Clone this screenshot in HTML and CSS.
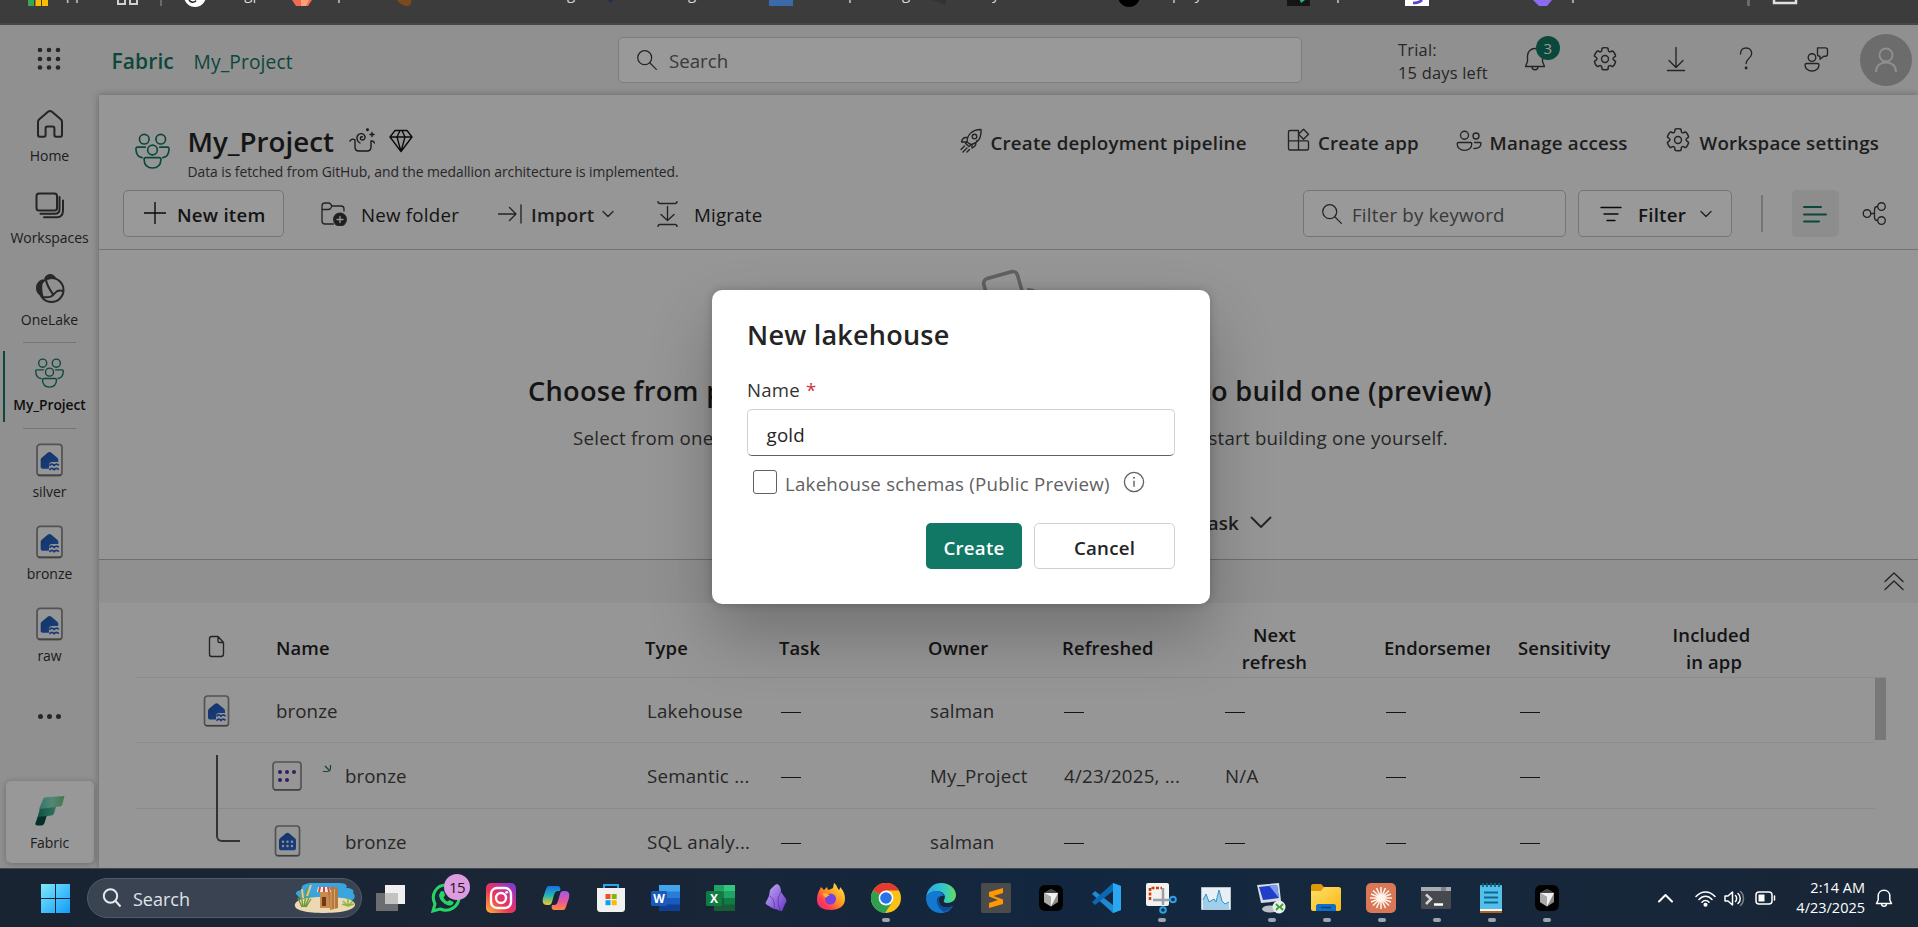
FILE: index.html
```html
<!DOCTYPE html>
<html lang="en">
<head>
<meta charset="utf-8">
<title>My_Project - Fabric</title>
<link rel="stylesheet" href="styles.css">
</head>
<body>
<svg class="defs" aria-hidden="true">
  <defs>
    <linearGradient id="gBlue" x1="0" y1="0" x2="1" y2="1"><stop offset="0" stop-color="#2455a8"/><stop offset="1" stop-color="#2a6bd8"/></linearGradient>
    <linearGradient id="gF1" x1="0" y1="0" x2="1" y2="0"><stop offset="0" stop-color="#4fc7b4"/><stop offset=".5" stop-color="#8fe0c4"/><stop offset="1" stop-color="#6fc77a"/></linearGradient>
    <linearGradient id="gF2" x1="0" y1="0" x2="1" y2="0"><stop offset="0" stop-color="#1f8a70"/><stop offset="1" stop-color="#4fc0a0"/></linearGradient>
    <linearGradient id="gWin" x1="0" y1="0" x2="1" y2="1"><stop offset="0" stop-color="#7fe8fb"/><stop offset="1" stop-color="#109cfa"/></linearGradient>
    <linearGradient id="gInsta" x1="0" y1="1" x2="1" y2="0"><stop offset="0" stop-color="#fdc03c"/><stop offset=".4" stop-color="#f0364f"/><stop offset=".7" stop-color="#c4309c"/><stop offset="1" stop-color="#6a3fe0"/></linearGradient>
    <linearGradient id="gFire" x1="1" y1="0" x2="0" y2="1"><stop offset="0" stop-color="#fff44f"/><stop offset=".45" stop-color="#ff9a1f"/><stop offset=".75" stop-color="#ff3a50"/><stop offset="1" stop-color="#e6249a"/></linearGradient>
    <linearGradient id="gEdge" x1="0" y1="0" x2="1" y2="0"><stop offset="0" stop-color="#2aa8ea"/><stop offset=".6" stop-color="#33c8c8"/><stop offset="1" stop-color="#64dd5a"/></linearGradient>
    <linearGradient id="gCop1" x1="0" y1="0" x2="0" y2="1"><stop offset="0" stop-color="#1a6fe8"/><stop offset=".5" stop-color="#24b6b0"/><stop offset="1" stop-color="#f4c92c"/></linearGradient>
    <linearGradient id="gCop2" x1="0" y1="0" x2="0" y2="1"><stop offset="0" stop-color="#9b5de8"/><stop offset=".55" stop-color="#e8579c"/><stop offset="1" stop-color="#ff8a3c"/></linearGradient>
    <linearGradient id="gObs" x1="0" y1="0" x2="1" y2="1"><stop offset="0" stop-color="#c3adf7"/><stop offset="1" stop-color="#6a35c9"/></linearGradient>
    <linearGradient id="gFold" x1="0" y1="0" x2="1" y2="1"><stop offset="0" stop-color="#ffdf6a"/><stop offset="1" stop-color="#f9b915"/></linearGradient>

    <symbol id="search" viewBox="0 0 24 24"><circle cx="9.5" cy="9.5" r="7.6"/><path d="M15 15l7.2 7.2"/></symbol>
    <symbol id="gear" viewBox="0 0 24 24"><path d="M12.01 1.5c.74 0 1.5.1 2.25.28.32.07.55.33.59.65l.2 1.75a1.38 1.38 0 0 0 1.92 1.11l1.6-.7c.3-.13.64-.06.85.17a10.3 10.3 0 0 1 2.3 4c.1.3 0 .63-.26.82l-1.42 1.05a1.38 1.38 0 0 0 0 2.22l1.42 1.05c.26.19.36.52.27.82a10.3 10.3 0 0 1-2.3 4 .75.75 0 0 1-.85.17l-1.62-.71a1.38 1.38 0 0 0-1.93 1.12l-.2 1.74a.75.75 0 0 1-.58.65 9.9 9.9 0 0 1-4.5 0 .75.75 0 0 1-.57-.65l-.2-1.74a1.38 1.38 0 0 0-1.93-1.11l-1.6.7a.75.75 0 0 1-.85-.18 10.3 10.3 0 0 1-2.3-4c-.1-.3 0-.63.26-.82l1.42-1.05a1.38 1.38 0 0 0 0-2.22L2.56 9.57a.75.75 0 0 1-.28-.82 10.3 10.3 0 0 1 2.3-4c.23-.23.57-.3.86-.17l1.6.7c.4.17.86.15 1.25-.08.38-.22.63-.6.68-1.04l.2-1.73a.75.75 0 0 1 .58-.65c.7-.16 1.5-.28 2.26-.28z"/><circle cx="12" cy="12" r="3.2"/></symbol>
    <symbol id="people" viewBox="0 0 34 35"><circle cx="9" cy="6" r="4.700"/><circle cx="25" cy="6" r="4.700"/><circle cx="17" cy="16.500" r="4.700"/><path d="M10 13.800H2.400c-1.200 0-1.600.6-1.500 2 .2 4.500 2.300 7.600 6 8.200M24 13.800h7.600c1.200 0 1.600.6 1.500 2-.2 4.500-2.300 7.600-6 8.200M10.500 24h13c1.200 0 1.800.6 1.700 1.800-.2 5-3.200 8.200-8.200 8.200s-8-3.200-8.200-8.200c0-1.200.5-1.800 1.700-1.800z"/></symbol>
    <symbol id="lake" viewBox="0 0 26 32"><rect x="1" y="1" width="24" height="30" rx="3" fill="#fafafa" stroke="#8a8a8a" stroke-width="1.700"/><path d="M2 30.500h22" stroke="#666" stroke-width="1.200"/><path d="M4.500 24.500V16c0-1 .4-1.600 1-2.200l6-5c1-.8 2-.8 3 0l6 5c.6.600 1 1.200 1 2.200v2h-6c-2 0-3 1.500-3 3.500v3H7c-1.500 0-2.500-.5-2.500-2z" fill="url(#gBlue)"/><path d="M13 21.500c1.500-2 3-2 4.500-.3 1.500-1.700 3-1.700 4.500 0M13 25.700c1.500-2 3-2 4.500-.3 1.500-1.700 3-1.700 4.500 0" fill="none" stroke="#2a5fc4" stroke-width="1.700"/></symbol>
    <symbol id="sql" viewBox="0 0 26 32"><rect x="1" y="1" width="24" height="30" rx="3" fill="#fafafa" stroke="#8a8a8a" stroke-width="1.700"/><path d="M2 30.500h22" stroke="#666" stroke-width="1.200"/><path d="M4.500 23V15.500c0-1 .4-1.600 1-2.200l6-5c1-.8 2-.8 3 0l6 5c.6.600 1 1.200 1 2.200V23c0 1.500-1 2.300-2.300 2.300H7c-1.500 0-2.500-.8-2.500-2.300z" fill="url(#gBlue)"/><g fill="#eef"><circle cx="8.500" cy="16.700" r="1.200"/><circle cx="13" cy="16.700" r="1.200"/><circle cx="17.500" cy="16.700" r="1.200"/><circle cx="8.500" cy="21" r="1.200"/><circle cx="13" cy="21" r="1.200"/><circle cx="17.500" cy="21" r="1.200"/></g></symbol>
    <symbol id="cursorapp" viewBox="0 0 24 26"><rect width="24" height="26" rx="6" fill="#020202"/><path d="M12 4l7 4v9l-7 4.500L5 17V8z" fill="#8d8d8d"/><path d="M12 4l7 4-7 3-7-3z" fill="#444"/><path d="M5 8h14l-7 13.500V12z" fill="#f0f0f0"/><path d="M12 12v9.500L5 17V8z" fill="#aaa"/></symbol>
  </defs>
</svg>

<div class="bookmarks">
  <svg width="1918" height="25" viewBox="0 0 1918 25">
    <g><path d="M28 0h6v6h-6z" fill="#34a853"/><path d="M35.500 0h12.500v6H35.500z" fill="#fbbc04"/><path d="M41 0h1v6h-1z" fill="#3c3c3c"/>
    <path d="M118 0v4h7V0M130 0v4h7V0" fill="none" stroke="#d0d0d0" stroke-width="2"/><path d="M160 0h2v6h-2z" fill="#6a6a6a"/>
    <circle cx="195" cy="-4" r="11" fill="#fff"/><path d="M189 0q3 4 7 1M195 0l4-2" stroke="#222" stroke-width="1.500" fill="none"/>
    <path d="M292 0h20l-4 6h-12z" fill="#f26a4f"/><path d="M301 0h8l-3 6h-5z" fill="#ffa07c"/>
    <path d="M397 0h14c1 3 0 5-3 6-5 0-8-2-11-6z" fill="#7a4a1e"/><path d="M608 0h5l-3 3z" fill="#1c3350"/>
    <path d="M769 0h24v6h-24z" fill="#3a6ba8"/><path d="M932 0h14v5z" fill="#333"/><circle cx="1129" cy="-4" r="11" fill="#000"/>
    <path d="M1287 0h23v6h-23z" fill="#151515"/><path d="M1300 0h5l-4 3z" fill="#2fb683"/><path d="M1405 0h24v6h-24z" fill="#fff"/><path d="M1413 3q6 0 9-3" stroke="#5b3fd0" stroke-width="2.500" fill="none"/>
    <path d="M1533 0h19l-5 6h-8z" fill="#8b6cf0"/><path d="M1747 0h3v6h-3z" fill="#6a6a6a"/><path d="M1774 0v3h22V0" fill="none" stroke="#e0e0e0" stroke-width="2.500"/></g>
    <g class="bm-text"><text x="56" y="-1">Apps</text><text x="211" y="-1">Chatgpt</text><text x="337" y="-1">p</text><text x="567" y="-1">g</text><text x="688" y="-1">g</text><text x="848" y="-1">p</text><text x="902" y="-1">g</text><text x="992" y="-1">y</text><text x="1172" y="-1">ploy</text><text x="1336" y="-1">p</text><text x="1571" y="-1">p</text></g>
  </svg>
</div>

<div class="app">
  <header class="topbar">
    <svg class="waffle" width="24" height="24" viewBox="0 0 24 24"><g><circle cx="3" cy="3" r="2.300"/><circle cx="12" cy="3" r="2.300"/><circle cx="21" cy="3" r="2.300"/><circle cx="3" cy="12" r="2.300"/><circle cx="12" cy="12" r="2.300"/><circle cx="21" cy="12" r="2.300"/><circle cx="3" cy="20.500" r="2.300"/><circle cx="12" cy="20.500" r="2.300"/><circle cx="21" cy="20.500" r="2.300"/></g></svg>
    <span class="brand">Fabric</span>
    <span class="crumb">My_Project</span>
    <div class="searchbox"><svg class="ic" width="22" height="22"><use href="#search"/></svg><span>Search</span></div>
    <div class="trial">Trial:<br>15 days left</div>
    <nav class="top-icons">
      <div class="ti"><svg class="ic" width="24" height="26" viewBox="0 0 24 26"><path d="M12 2.500c-4.500 0-7.500 3.300-7.500 7.500v5.500L2.500 20.500h19L19.500 15.500V10c0-4.200-3-7.500-7.500-7.500zM9 20.700c0 4 6 4 6 0"/></svg><b class="badge">3</b></div>
      <div class="ti"><svg class="ic" width="26" height="26"><use href="#gear"/></svg></div>
      <div class="ti"><svg class="ic" width="22" height="26" viewBox="0 0 22 26"><path d="M11 1.500v20M4 14.500l7 7 7-7M2.500 24.500h17"/></svg></div>
      <div class="ti"><svg class="ic" width="16" height="26" viewBox="0 0 16 26"><path d="M2.500 8c0-4 2.300-6 5.600-6s5.600 2.200 5.600 5.500c0 4.500-5.600 5.300-5.600 10"/><circle cx="8.100" cy="22" r=".8" fill="#333"/></svg></div>
      <div class="ti"><svg class="ic" width="26" height="26" viewBox="0 0 26 26"><circle cx="9" cy="11.500" r="3.800"/><path d="M3.500 17.500h11c1 0 1.500.5 1.500 1.500 0 3.500-3 6-7 6s-7-2.500-7-6c0-1 .5-1.500 1.500-1.500zM14.500 1.800h8c1.200 0 2 .8 2 2v4.400c0 1.200-.8 2-2 2h-1.700l-3.800 3v-3c-1.600 0-2.500-.8-2.500-2z"/></svg></div>
    </nav>
    <div class="avatar"><svg width="24" height="26" viewBox="0 0 24 26"><circle cx="12" cy="8" r="6.500"/><path d="M2 25c0-6 4-9.500 10-9.500S22 19 22 25"/></svg></div>
  </header>

  <div class="body">
    <aside class="side">
      <div class="item"><svg class="ic thick" width="28" height="29" viewBox="0 0 28 29"><path d="M2 12.500c0-1.200.4-2 1.300-2.800L12 2.200c1.300-1 2.700-1 4 0l8.700 7.500c.9.800 1.300 1.600 1.300 2.800v13c0 1-.8 1.800-1.800 1.800h-4c-1 0-1.800-.8-1.800-1.800v-6.700c0-1-.8-1.800-1.800-1.800h-5.200c-1 0-1.800.8-1.800 1.800v6.700c0 1-.8 1.800-1.800 1.800h-4c-1 0-1.800-.8-1.800-1.800z"/></svg><span>Home</span></div>
      <div class="item"><svg class="ic thick" width="30" height="28" viewBox="0 0 30 28"><rect x="1.500" y="1.500" width="20.500" height="17" rx="2.500"/><path d="M24.500 5v12c0 3-1.500 4.800-4.500 4.800H5.500M28 8.500V18c0 5-2 7.300-6 7.300H9"/></svg><span>Workspaces</span></div>
      <div class="item short"><svg width="30" height="30" viewBox="0 0 30 30"><path d="M9 5.500C11 2 13 1 15 1c3 0 5.500 2 6.500 5-4-.5-8 .5-10 .8zM1 15C1 10.500 4 7 8.500 6 6.500 12 7 18 8.500 23.500 4 23 1 19.500 1 15z" fill="#424242"/><g fill="none" stroke="#424242" stroke-width="2"><circle cx="16.500" cy="17" r="12"/><path d="M11 7c1 6 4 10 7.500 15M6.500 24c9 1 11-.5 14-4.500 2-2.500 4-2.500 8-1.500"/></g></svg><span>OneLake</span></div>
      <hr class="d1">
      <div class="item active"><svg class="ic green" width="29" height="30"><use href="#people"/></svg><span>My_Project</span></div>
      <hr class="d2">
      <div class="item"><svg width="27" height="33"><use href="#lake"/></svg><span>silver</span></div>
      <div class="item"><svg width="27" height="33"><use href="#lake"/></svg><span>bronze</span></div>
      <div class="item"><svg width="27" height="33"><use href="#lake"/></svg><span>raw</span></div>
      <div class="more"><i></i><i></i><i></i></div>
      <div class="fabric"><svg width="30" height="30" viewBox="0 0 30 30"><path d="M3.500 18.500L12 19l-2.500 8c-.8 2-2 2.500-4 2.500h-3C.5 29.500 0 28.500.5 27z" fill="#0d4f45"/><path d="M5 12l16-1.500-1.800 6.500c-.4 1.500-1.400 2.200-3 2.400L2.700 21z" fill="url(#gF2)"/><path d="M8 3.500C8.500 2 9.500 1.300 11 1.200L29.500 0l-2.300 8.500c-.4 1.300-1.200 1.900-2.600 2L4 13z" fill="url(#gF1)"/></svg><span>Fabric</span></div>
    </aside>

    <main class="panel">
      <section class="head">
        <svg class="ic green wsicon" width="35" height="36"><use href="#people"/></svg>
        <div class="titles">
          <div class="trow"><h1>My_Project</h1>
            <svg class="ic dk" width="26" height="25" viewBox="0 0 26 25"><path d="M1 13c1.500-2 3-2.500 5-1v7c0 3 1 4 4 4h8c3 0 4-1 4-4v-6c1.500-.5 2.500 0 3.500 2M13.500 9c-1.500-1-3 1-1.500 2.500 2 1.500 4.500-.5 4-3-.7-3-5-4-7-1.500s-1 6.500 2 8M21 6.500h4M23 4.500v4"/><circle cx="18.500" cy="1.800" r=".8"/></svg>
            <svg class="ic blk" width="24" height="24" viewBox="0 0 24 24"><path d="M6 1.500h12L23 8 12 22.500 1 8zM1 8h22M8 8l4 14.500L16 8l-3-6.500h-2z"/></svg>
          </div>
          <p>Data is fetched from GitHub, and the medallion architecture is implemented.</p>
        </div>
        <div class="links">
          <a class="l1"><svg class="ic" width="24" height="25" viewBox="0 0 24 25"><path d="M8 14C8 7 13 1.500 22 1.500c.5 8-3 13.500-10 15zM8.500 9.500H6.200C4 10 3 11.500 2.500 14l5 0M13 16.500v3.500c2.500-1 4-2.500 4-5.500l1-2M8 14l4 3-2 1.500-3.500-3zM5.500 18L2 21.500M8 20l-4 4M10.500 21.500L8 24"/><circle cx="15.500" cy="8.500" r="2.300"/></svg>Create deployment pipeline</a>
          <a class="l2"><svg class="ic" width="23" height="24" viewBox="0 0 23 24"><path d="M11.500 2.500H3c-1 0-1.500.5-1.500 1.500v16.500c0 1 .5 1.500 1.500 1.500h17c1 0 1.500-.5 1.500-1.500V14c0-.8-.4-1.200-1.200-1.200H1.500M11.500 2.500V22M16.500 1.200l5 5-5 5-5-5z"/></svg>Create app</a>
          <a class="l3"><svg class="ic" width="26" height="22" viewBox="0 0 26 22"><circle cx="8.500" cy="5.200" r="4"/><circle cx="20" cy="6" r="3"/><path d="M2.500 12.500h12c.8 0 1.300.5 1.300 1.300 0 4-3 6.500-7.300 6.500s-7.300-2.500-7.300-6.500c0-.8.500-1.300 1.300-1.300zM18.500 12.500H24c.7 0 1 .3 1 1 0 3-2.500 5.300-7 5"/></svg>Manage access</a>
          <a class="l4"><svg class="ic" width="26" height="26"><use href="#gear"/></svg>Workspace settings</a>
        </div>
      </section>

      <section class="tools">
        <button class="newitem"><svg class="ic blk" width="22" height="22" viewBox="0 0 22 22"><path d="M11 0v22M0 11h22"/></svg><span>New item</span></button>
        <a class="t1"><svg class="ic" width="26" height="24" viewBox="0 0 26 24"><path d="M12.500 22H4c-1.700 0-3-1.200-3-3V4c0-1.700 1.200-3 3-3h3.500c1 0 1.500.3 2 1l1.500 2h9c1.700 0 3 1.200 3 3v2M1 7.500h6.500c1 0 1.500-.3 2-1L11 4"/><circle cx="19" cy="17.500" r="6.300" fill="#333"/><path d="M19 14.500v6M16 17.500h6" stroke="#fafafa"/></svg><span>New folder</span></a>
        <a class="t2"><svg class="ic" width="24" height="20" viewBox="0 0 24 20"><path d="M0 10h18M11.500 3.500l6.500 6.500-6.500 6.500M23 1v18"/></svg><b>Import</b><svg class="ic" width="12" height="8" viewBox="0 0 12 8"><path d="M1 1.500l5 5 5-5"/></svg></a>
        <a class="t3"><svg class="ic" width="21" height="26" viewBox="0 0 21 26"><path d="M1 .5C1 2 1.500 2.500 3 2.500h15c1.500 0 2-.5 2-2M1 25.500c0-1.500.5-2 2-2h15c1.500 0 2 .5 2 2M10.500 5.500v14M4 13.500l6.500 6 6.500-6"/></svg><span>Migrate</span></a>
        <div class="filterbox"><svg class="ic" width="22" height="22"><use href="#search"/></svg><span>Filter by keyword</span></div>
        <button class="filterbtn"><svg class="ic blk" width="22" height="16" viewBox="0 0 22 16"><path d="M1 1.500h20M4 8h14M7 14.500h8"/></svg><span>Filter</span><svg class="ic" width="12" height="8" viewBox="0 0 12 8"><path d="M1 1.500l5 5 5-5"/></svg></button>
        <i class="vsep"></i>
        <div class="listbtn"><svg width="24" height="18" viewBox="0 0 24 18"><path d="M1 2h17M1 9.500h22M1 16.500h15" stroke="#117865" stroke-width="2" stroke-linecap="round"/></svg></div>
        <svg class="ic lineage" width="25" height="24" viewBox="0 0 25 24"><circle cx="5" cy="12" r="3.800"/><circle cx="19.500" cy="5" r="3.800"/><circle cx="19.500" cy="19" r="3.800"/><path d="M9 12h3.500M15.500 5c-2 0-3 1-3 3v8c0 2 1 3 3 3"/></svg>
      </section>

      <section class="flow">
        <svg class="art" width="64" height="50" viewBox="0 0 64 50"><g fill="none" stroke="#a2a2a2" stroke-width="3.600"><rect x="6" y="5" width="35" height="38" rx="5" transform="rotate(-16 25 24)"/><path d="M46 21h3c3 0 6 2 6 5v20"/></g></svg>
        <div class="fh"><span>Choose from predesigned</span><span>a task to build one (preview)</span></div>
        <div class="fs"><span>Select from one of Microsoft's</span><span>a task to start building one yourself.</span></div>
        <div class="fa"><b>Add a task</b><svg class="ic chev" width="22" height="13" viewBox="0 0 22 13"><path d="M1.500 1.500l9.500 9.500 9.500-9.500"/></svg></div>
      </section>
      <div class="bar"><svg class="ic" width="20" height="20" viewBox="0 0 20 20"><path d="M1 10.500l9-8.500 9 8.500M1 18.500L10 10l9 8.500"/></svg></div>

      <section class="table">
        <div class="row hd"><span><svg class="ic docic" width="17" height="23" viewBox="0 0 17 23"><path d="M3.500 1.500h6.500l5.500 6v11.500c0 1.500-.8 2.500-2.500 2.500H3.500C2 21.500 1.500 20.500 1.500 19V4c0-1.500.5-2.500 2-2.500zM10 1.500V6c0 1 .5 1.500 1.500 1.500h4"/></svg></span><span>Name</span><span>Type</span><span>Task</span><span>Owner</span><span>Refreshed</span><span class="two">Next<br>refresh</span><span class="clip">Endorsement</span><span>Sensitivity</span><span class="two inc">Included<br>&nbsp;in app</span></div>
        <div class="row"><span><svg class="lk" width="27" height="32"><use href="#lake"/></svg></span><span class="nm">bronze</span><span>Lakehouse</span><span><i class="dash"></i></span><span>salman</span><span><i class="dash"></i></span><span class="nx"><i class="dash"></i></span><span><i class="dash"></i></span><span><i class="dash"></i></span><span></span></div>
        <div class="row r2"><span></span><span class="nm kid"><svg class="sm" width="30" height="30" viewBox="0 0 30 30"><rect x="1" y="1" width="28" height="28" rx="3" fill="#fafafa" stroke="#8a8a8a" stroke-width="1.700"/><path d="M2 28.800h26" stroke="#666" stroke-width="1.200"/><g fill="#5a2fa0"><circle cx="8" cy="11" r="2"/><circle cx="15" cy="11" r="2"/><circle cx="22" cy="11" r="2"/><circle cx="8" cy="19" r="2"/><circle cx="15" cy="19" r="2"/></g></svg><svg class="arr" width="9" height="8" viewBox="0 0 9 8"><path d="M2 1l4 4M7.500 0v2.500c0 3-1 4-3.500 4H0" fill="none" stroke="#2f6a60" stroke-width="1.200"/></svg>bronze</span><span>Semantic ...</span><span><i class="dash"></i></span><span>My_Project</span><span>4/23/2025, ...</span><span class="nx">N/A</span><span><i class="dash"></i></span><span><i class="dash"></i></span><span></span></div>
        <div class="row"><span></span><span class="nm kid k2"><svg width="27" height="32"><use href="#sql"/></svg>bronze</span><span>SQL analy...</span><span><i class="dash"></i></span><span>salman</span><span><i class="dash"></i></span><span class="nx"><i class="dash"></i></span><span><i class="dash"></i></span><span><i class="dash"></i></span><span></span></div>
        <i class="tree"></i><i class="scroll"></i>
      </section>
    </main>
  </div>
  <div class="shade"></div>

  <div class="dialog">
    <h2>New lakehouse</h2>
    <label>Name <em>*</em></label>
    <div class="field">gold</div>
    <div class="check"><i></i><span>Lakehouse schemas (Public Preview)</span><svg width="22" height="22" viewBox="0 0 22 22"><circle cx="11" cy="11" r="9.600" fill="none" stroke="#616161" stroke-width="1.300"/><path d="M11 9.700v6" stroke="#616161" stroke-width="1.400"/><circle cx="11" cy="6.700" r="1" fill="#616161"/></svg></div>
    <div class="btns"><button class="create">Create</button><button class="cancel">Cancel</button></div>
  </div>
</div>

<footer class="taskbar">
  <svg class="start" width="29" height="29" viewBox="0 0 29 29"><path d="M0 0h14v14H0zM15 0h14v14H15zM0 15h14v14H0zM15 15h14v14H15z" fill="url(#gWin)"/></svg>
  <div class="tsearch"><svg width="20" height="20" viewBox="0 0 20 20" fill="none" stroke="#e6e9ee" stroke-width="2"><circle cx="8.500" cy="8" r="6.700"/><path d="M13.500 13l5 5.500"/></svg><span>Search</span>
    <svg width="62" height="32" viewBox="0 0 62 32"><path d="M3 13C0 11 4 8 8 8 6 3 12 1 18 1h28c6 0 8 3 6 5 5 0 9 2 7 5 3 3 2 6-2 8H8z" fill="#3aa5dc"/><path d="M1 22c2-5 12-7 28-7s30 1 32 7c1 5-10 9-30 9S-1 28 1 22z" fill="#ecd9b4"/><path d="M26 10h10v16H26z" fill="#c98b4c"/><path d="M34 8c3-4 8-4 10-1v19l-8 2z" fill="#b5793f"/><path d="M37 8v19M40.500 7v20" stroke="#dca86a"/><path d="M28 15h4v9h-4z" fill="#6b3c19"/><path d="M24 5h11l2 5H23z" fill="#f3f0ea"/><path d="M25 5h2l-1 5h-2zM29 5h2v5h-2zM33 5h2l1 5h-2z" fill="#dc4438"/><path d="M9 25L7 12M10 25l3-19M11 25l5-12M12 25l5-8M8 25l-4-9" stroke="#6f9a34" stroke-width="1.400"/><path d="M17 3l-4 11M8 7l1 9" stroke="#e8c878" stroke-width="2"/><path d="M54 24l-5-5M54 24v-8M54 24l5-5M54 24l-6-2M54 24l6-2" stroke="#88b83c" stroke-width="1.500"/></svg></div>
  <div class="apps">
    <i><svg width="30" height="28" viewBox="0 0 30 28"><path d="M0 9h22v18H0z" fill="#6b6d70"/><path d="M9 1h20v19H9z" fill="#f0f0f0"/><path d="M9 9h13v11H9z" fill="#c2c2c2"/></svg></i>
    <i><svg width="30" height="30" viewBox="0 0 30 30"><path d="M2 28l2-7C-1 11 6 2 15 2s14 7 13 14-9 14-19 10z" fill="none" stroke="#25d366" stroke-width="3"/><path d="M10 8l3 .5 1 4-1.500 2c1 2 2 3 4 4l2-1.500 4 2c0 3-3 4-5 3.500C12 21 8 16 8 12z" fill="#25d366"/></svg><b class="wb">15</b></i>
    <i><svg width="30" height="30" viewBox="0 0 30 30"><rect width="30" height="30" rx="5" fill="url(#gInsta)"/><rect x="5" y="5" width="20" height="20" rx="6" fill="none" stroke="#fff" stroke-width="2.400"/><circle cx="15" cy="15" r="5" fill="none" stroke="#fff" stroke-width="2.400"/><circle cx="20.700" cy="9.300" r="1.400" fill="#fff"/></svg></i>
    <i><svg width="28" height="26" viewBox="0 0 28 26"><path d="M7 1h8c3 0 4 2 3 5h-2c-2 0-3 1-4 4l-2 7c-1 3-2 3-5 3-4 0-5-3-4-7l3-9c1-2 1-3 3-3z" fill="url(#gCop1)"/><path d="M21 25h-8c-3 0-4-2-3-5h2c2 0 3-1 4-4l2-7c1-3 2-3 5-3 4 0 5 3 4 7l-3 9c-1 2-1 3-3 3z" fill="url(#gCop2)"/></svg></i>
    <i><svg width="30" height="30" viewBox="0 0 30 30"><path d="M8 6V2h14v4" fill="none" stroke="#2ba4ec" stroke-width="2"/><path d="M1 5h28v20c0 3-1 4-4 4H5c-3 0-4-1-4-4z" fill="#f1f1f1"/><path d="M9.500 11h5v5h-5z" fill="#f25022"/><path d="M15.700 11h5v5h-5z" fill="#7fba00"/><path d="M9.500 17.200h5v5h-5z" fill="#00a4ef"/><path d="M15.700 17.200h5v5h-5z" fill="#ffb900"/></svg></i>
    <i><svg width="30" height="28" viewBox="0 0 30 28"><path d="M8 1h21v7H8z" fill="#41a5ee"/><path d="M8 7.500h21V14H8z" fill="#2b7cd3"/><path d="M8 14h21v7H8z" fill="#185abd"/><path d="M8 20.500h21V27H8z" fill="#103f91"/><rect y="7" width="16" height="15" rx="1.500" fill="#185abd"/><text x="8" y="19" class="ltr">W</text></svg></i>
    <i><svg width="30" height="28" viewBox="0 0 30 28"><path d="M8 1h11v7H8z" fill="#21a366"/><path d="M18 1h11v7H18z" fill="#33c481"/><path d="M8 7.500h21V14H8z" fill="#107c41"/><path d="M18 7.500h11V14H18z" fill="#21a366"/><path d="M8 14h21v13H8z" fill="#185c37"/><path d="M18 14h11v6.500H18z" fill="#107c41"/><rect y="7" width="16" height="15" rx="1.500" fill="#107c41"/><text x="8" y="19" class="ltr">X</text></svg></i>
    <i><svg width="22" height="28" viewBox="0 0 22 28"><path d="M12 0c3 1 4 4 4 8l5 7c1 2 0 3-1 5l-3 7c-3 0-5-2-8-2l-7-4c-1-1-2-2-1-3l3-6 1-6c2-2 4-5 7-6z" fill="url(#gObs)"/><path d="M5 12c4 3 5 8 4 13M16 8c-2 5-5 7-1 18" stroke="#4d2599" fill="none" opacity=".6"/></svg></i>
    <i><svg width="28" height="30" viewBox="0 0 28 30"><path d="M4 4l3 3 3-3 1 3c2-1 4-1 5-2l1-5c3 2 3 5 5 7 1-1 1-2 1-3 4 4 5 8 5 12 0 7-6 11-14 11S0 24 0 17C0 11 2 8 4 4z" fill="url(#gFire)"/><circle cx="13.500" cy="16" r="5.500" fill="#7542e5"/><path d="M5 11c4-2 5 0 8 1-2 1-4 2-4 3z" fill="#ffb42f"/></svg></i>
    <i class="on"><svg width="30" height="30" viewBox="0 0 30 30"><circle cx="15" cy="15" r="15" fill="#fbc116"/><path d="M15 15L2 7.500A15 15 0 0 1 28 7.500H15z" fill="#e33b2e"/><path d="M2 7.500A15 15 0 0 0 14 30l7.500-11.300L15 15z" fill="#2ea04f"/><circle cx="15" cy="15" r="7.400" fill="#fff"/><circle cx="15" cy="15" r="5.800" fill="#2a72e8"/></svg></i>
    <i><svg width="30" height="30" viewBox="0 0 30 30"><path d="M0 15C1 6 7 0 15 0c9 0 15 6 15 12 0 5-4 8-9 8-2 0-4-1-3-3 3-5-2-9-7-9S1 11 0 15z" fill="url(#gEdge)"/><path d="M0 15c1-4 5-7 10-7 4 0 7 2 8 5-4-1-6 2-5 6 1 5 6 7 14 4-3 5-7 7-12 7C7 30 0 24 0 15z" fill="#1478cf"/><path d="M13 13c-4 3-3 11 5 16 4-1 7-3 9-6-8 3-13 1-14-4z" fill="#114c9c"/></svg></i>
    <i><svg width="30" height="30" viewBox="0 0 30 30"><rect width="30" height="30" rx="2" fill="#4b4b4b"/><path d="M22 5v5L12.500 13 22 16.500v4.500L8 25v-5l9-3-9-3.500V9z" fill="#ff9800"/></svg></i>
    <i><svg width="24" height="26"><use href="#cursorapp"/></svg></i>
    <i><svg width="30" height="30" viewBox="0 0 30 30"><path d="M22 0l8 3v24l-8 3L1 11l3-3 18 14z" fill="#1f8ad2"/><path d="M22 0v8L4 22l-3-3z" fill="#0b69b3"/><path d="M22 0l8 3v24l-8 3z" fill="#2aa7f2"/></svg></i>
    <i class="on"><svg width="32" height="31" viewBox="0 0 32 31"><rect x="1" width="23" height="23" rx="2" fill="#f2f2f2"/><path d="M5 17V5h12" fill="none" stroke="#d83b01" stroke-width="2.600" stroke-dasharray="3 1.500"/><path d="M18 5v17M8 17h17" stroke="#9aa0a6" stroke-width="2.500"/><circle cx="28" cy="16.500" r="2.800" fill="none" stroke="#2aa0e8" stroke-width="2"/><circle cx="18" cy="27" r="2.800" fill="none" stroke="#2aa0e8" stroke-width="2"/></svg></i>
    <i><svg width="30" height="23" viewBox="0 0 30 23"><path d="M.5.500h29v22H.5z" fill="#e9f0f5" stroke="#b8c4cc"/><path d="M2 13l3-6 3 8 5-3 2 3 3-12 3 11 3 3 4-2v7H2z" fill="#9fd0ea"/><path d="M2 13l3-6 3 8 5-3 2 3 3-12 3 11 3 3 4-2" fill="none" stroke="#3a8fc4"/></svg></i>
    <i class="on"><svg width="30" height="31" viewBox="0 0 30 31"><path d="M1 2l22-2 2 18-20 2z" fill="#d6dce4"/><path d="M3 4l18-2 2 13-16 2z" fill="#1f3fc8"/><path d="M13 2.500l8-.5 2 13z" fill="#7f9df0"/><ellipse cx="14" cy="26" rx="8" ry="3.500" fill="#b9bfc7"/><circle cx="23" cy="24" r="6.500" fill="#e8ede8"/><path d="M20 21l3 3-3 3M27 21l-3 3 3 3" stroke="#3fa037" stroke-width="1.800" fill="none"/></svg></i>
    <i class="on"><svg width="30" height="28" viewBox="0 0 30 28"><path d="M0 2c0-1 1-2 2-2h8l3 3-2 5H0z" fill="#dd9a0a"/><path d="M0 7h10l3-4h15c1 0 2 1 2 2v20c0 1-1 2-2 2H2c-1 0-2-1-2-2z" fill="url(#gFold)"/><path d="M5 27v-5c0-1 1-2 2-2h16c1 0 2 1 2 2v5z" fill="#0f6fc6"/><path d="M10 23.500h10" stroke="#0a3f80" stroke-width="1.500"/></svg></i>
    <i class="on"><svg width="30" height="30" viewBox="0 0 30 30"><rect width="30" height="30" rx="5" fill="#d97757"/><path d="M15 4v22M4 15h22M7 7.500l16 15M7 22.500L23 7.500M10.500 5l9 20M19.500 5l-9 20M5 11l20 8M5 19l20-8" stroke="#fff3ec" stroke-width="1.600"/></svg></i>
    <i class="on"><svg width="30" height="22" viewBox="0 0 30 22"><rect width="30" height="22" rx="1.500" fill="#46494d"/><path d="M0 0h30v4H0z" fill="#a8abb0"/><path d="M20 0h5v4h-5z" fill="#7d8085"/><path d="M5 7.500l5 4.500-5 5" fill="none" stroke="#d5d5d5" stroke-width="2.500"/><path d="M13 17.500h9" stroke="#fff" stroke-width="2.500"/></svg></i>
    <i class="on"><svg width="22" height="30" viewBox="0 0 22 30"><rect y="2" width="22" height="27" rx="1" fill="#52c0e8"/><path d="M0 26h22v2H0z" fill="#f4f4f4"/><path d="M0 28h22v2H0z" fill="#b5601c"/><path d="M3 0v4M7 0v4M11 0v4M15 0v4M19 0v4" stroke="#0f5f86" stroke-width="1.800"/><path d="M4 9.500h14M4 14.500h14M4 19.500h14" stroke="#12668f" stroke-width="1.800"/></svg></i>
    <i class="on"><svg width="24" height="26"><use href="#cursorapp"/></svg></i>
  </div>
  <div class="tray">
    <svg class="wh up" width="15" height="10" viewBox="0 0 15 10"><path d="M1 8.500L7.500 2 14 8.500"/></svg>
    <svg class="wh wifi" width="21" height="17" viewBox="0 0 21 17"><path d="M1 6.500c5.500-6 13.500-6 19 0M4 9.500c4-4.300 9-4.300 13 0M7 12.300c2-2.300 5-2.300 7 0"/><circle cx="10.500" cy="14.700" r="1.300" fill="#fff"/></svg>
    <svg class="wh vol" width="21" height="17" viewBox="0 0 21 17"><path d="M1 6h3l4.500-4v13L4 11H1zM11.500 5.500c1.500 1.500 1.500 4.500 0 6M14 3.500c3 2.500 3 7.500 0 10"/><path d="M16.500 1.500c4 3.500 4 10.500 0 14" opacity=".4"/></svg>
    <svg class="wh bat" width="21" height="14" viewBox="0 0 21 14"><rect x="1" y="1" width="16" height="12" rx="3"/><path d="M19.500 5v4"/><path d="M3.500 3.500h6v7h-6z" fill="#fff" stroke="none"/></svg>
    <div class="clock">2:14 AM<br>4/23/2025</div>
    <svg class="wh bell" width="18" height="19" viewBox="0 0 18 19"><path d="M9 1.200C5.500 1.200 3.200 3.800 3.200 7v4L1.500 14.500h15L14.800 11V7c0-3.200-2.300-5.800-5.800-5.800zM6.500 14.700c.2 3.500 4.800 3.500 5 0"/></svg>
  </div>
</footer>
</body>
</html>
```
FILE: styles.css
```css
* { box-sizing: border-box; }
body { margin: 0; width: 1918px; height: 927px; overflow: hidden; font-family: "Open Sans", "Noto Sans", sans-serif; font-size: 18.7px; letter-spacing: .23px; color: #242424; display: flex; flex-direction: column; }
h1, h2, p { margin: 0; font-weight: 600; }
i { font-style: normal; }
button { font: inherit; font-weight: 600; color: inherit; padding: 0; letter-spacing: inherit; }
.defs { position: absolute; width: 0; height: 0; }
svg { flex: none; display: block; }
.ic { fill: none; stroke: #3c3c3c; stroke-width: 1.35; stroke-linecap: round; stroke-linejoin: round; }
.ic.thick { stroke-width: 2; }
.ic.green { stroke: #117865; stroke-width: 1.6; }
.ic.dk { stroke: #242424; }
.ic.blk { stroke: #111; }
.ic.chev { stroke-width: 1.800; }

.bookmarks { height: 25px; flex: none; background: #3c3c3c; border-bottom: 2px solid #474747; overflow: hidden; }
.bm-text { fill: #d8d8d8; font-size: 15px; }

.app { position: relative; height: 843px; flex: none; display: flex; flex-direction: column; background: #f0f0f0; overflow: hidden; }
.topbar { height: 70px; flex: none; display: flex; align-items: center; position: relative; }
.waffle { margin-left: 37px; fill: #424242; margin-top: -2px; }
.brand { margin-left: 50.500px; width: 82px; font-size: 21px; font-weight: 600; color: #117865; letter-spacing: .1px; padding-top: 1px; }
.crumb { color: #117865; width: 424.500px; font-size: 19.2px; padding-top: 3px; letter-spacing: .15px; }
.searchbox { width: 684px; height: 46px; border: 1px solid #d1d1d1; border-radius: 5px; background: #fff; display: flex; align-items: center; padding-left: 17px; gap: 11px; color: #616161; letter-spacing: 0; }
.trial { margin-left: 96px; width: 102px; font-size: 16.4px; line-height: 23px; color: #424242; white-space: nowrap; padding-top: 1px; }
.top-icons { display: flex; }
.ti { width: 70.3px; display: flex; justify-content: center; align-items: center; position: relative; margin-top: -2px; }
.badge { position: absolute; left: 36px; top: -10px; width: 24px; height: 24px; border-radius: 50%; background: #117865; color: #fff; font-weight: 400; font-size: 15px; line-height: 24px; text-align: center; }
.avatar { width: 52px; height: 52px; border-radius: 50%; background: #b5b5b5; margin-left: 9px; display: flex; align-items: center; justify-content: center; }
.avatar svg { fill: none; stroke: #f0f0f0; stroke-width: 1.8; }

.body { flex: 1; display: flex; min-height: 0; }
.side { width: 99px; flex: none; padding-top: 6px; display: flex; flex-direction: column; align-items: center; font-size: 14px; letter-spacing: -.05px; color: #333; }
.item { height: 82px; width: 99px; flex: none; display: flex; flex-direction: column; align-items: center; position: relative; }
.item svg { height: 46px; }
.item span { line-height: 18px; margin-top: 0; }
.item.short { height: 77px; }
.side hr { width: 53px; height: 1px; border: 0; background: #c4c4c4; margin: 0; flex: none; }
.side .d1 { margin-bottom: 7px; }
.item.active { height: 78px; font-weight: 600; color: #161616; font-size: 13.800px; }
.item.active::before { content: ""; position: absolute; left: 3px; top: 1px; width: 2px; height: 71px; background: #117865; }
.side .d2 { margin-bottom: 8px; }
.more { display: flex; gap: 4px; margin-top: 31px; }
.more i { width: 5px; height: 5px; border-radius: 50%; background: #424242; }
.fabric { width: 88px; height: 82px; margin-top: 62px; flex: none; background: #fdfdfd; border-radius: 5px; box-shadow: 0 1px 6px rgba(0,0,0,.25); display: flex; flex-direction: column; align-items: center; padding-top: 15px; }
.fabric span { margin-top: 8px; line-height: 18px; }

.panel { flex: 1; min-width: 0; background: #fafafa; box-shadow: 0 0 7px rgba(0,0,0,.3); display: flex; flex-direction: column; }
.head { height: 95px; flex: none; display: flex; padding: 39px 0 0 36px; position: relative; }
.wsicon { margin-top: -1px; }
.titles { margin-left: 17.500px; width: 771.500px; margin-top: -13px; }
.trow { display: flex; align-items: center; height: 40px; }
.trow h1 { font-size: 27.7px; width: 161px; line-height: 40px; letter-spacing: 0; }
.trow svg + svg { margin-left: 14px; }
.trow svg { margin-top: -1px; }
.titles p { font-size: 13.900px; font-weight: 400; color: #424242; white-space: nowrap; line-height: 19px; margin-top: 1px; letter-spacing: -.06px; }
.links { display: flex; font-weight: 600; color: #333; white-space: nowrap; height: 24px; margin-top: -4px; }
.links a { display: flex; align-items: center; }
.links svg { margin-top: -4px; }
.l1 { width: 328px; gap: 7.500px; }
.l2 { width: 169px; gap: 8px; }
.l3 { width: 209px; gap: 7.500px; }
.links .l3 svg { margin-top: -2px; }
.l4 { gap: 8.500px; }

.tools { height: 60px; flex: none; display: flex; padding-left: 24px; align-items: flex-start; border-bottom: 1px solid #c0c0c0; white-space: nowrap; }
.tools > * { height: 47px; display: flex; align-items: center; flex: none; }
.tools span, .tools b { padding-top: 1.500px; }
.newitem { width: 161px; background: #fff; border: 1px solid #c4c4c4; border-radius: 5px; padding-left: 20px; gap: 11px; }
.newitem svg { margin-top: -1px; }
.t1 { margin-left: 37px; gap: 14px; width: 177px; }
.t2 { gap: 9px; width: 159px; }
.t2 b { font-weight: 600; color: #333; margin-right: -1px; }
.t3 { gap: 16px; width: 646px; }
.filterbox { width: 263px; border: 1px solid #c4c4c4; border-radius: 5px; background: #fff; padding-left: 17px; gap: 9px; color: #616161; }
.filterbtn { width: 154px; margin-left: 12px; background: #fff; border: 1px solid #c4c4c4; border-radius: 5px; padding-left: 21px; gap: 16px; }
.filterbtn svg + span + svg { margin-left: -2px; }
.tools .vsep { width: 1.500px; height: 37px; margin: 5px 29px 0; background: #c4c4c4; }
.listbtn { width: 47px; background: #ebebeb; border-radius: 5px; justify-content: center; }
.lineage { margin-left: 23px; }

.flow { height: 310px; flex: none; border-bottom: 1px solid #b8b8b8; padding-top: 19px; }
.art { margin-left: 882px; }
.fh, .fs { display: flex; justify-content: space-between; white-space: nowrap; }
.fh { width: 964px; margin: 55px 0 0 429px; font-size: 27.2px; font-weight: 600; line-height: 34px; letter-spacing: .28px; }
.fs { width: 875px; margin: 17px 0 0 474px; line-height: 26px; color: #424242; }
.fa { display: flex; align-items: center; width: 220px; justify-content: flex-end; margin: 59px 0 0 953px; gap: 11px; }
.fa b { font-weight: 600; color: #333; }
.bar { height: 43px; flex: none; background: #f0f0f0; display: flex; justify-content: flex-end; align-items: flex-start; padding: 11px 14px 0 0; }

.table { position: relative; flex: none; padding-left: 36px; }
.row { display: grid; grid-template-columns: 141px 369px 134px 149px 134px 134px 188px 134px 134px 223px; width: 1740px; height: 65px; align-items: center; border-bottom: 1px solid #e8e8e8; color: #424242; padding-top: 1px; }
.row.r2 { height: 66px; padding-top: 0; }
.row > span { padding-left: 2px; white-space: nowrap; }
.row.hd { height: 75px; font-weight: 600; color: #242424; font-size: 18.4px; width: 1751px; padding-top: 15px; letter-spacing: .15px; }
.row.hd > span { padding-left: 0; }
.row.hd .docic { margin: -3px 0 0 73px; }
.row .lk { margin-left: 66px; }
.row .nm { padding-left: 0; letter-spacing: .1px; }
.row .nx { padding-left: 29px; }
.row .two { width: 157px; text-align: center; line-height: 27px; }
.row .inc { width: 119px; }
.row .clip { width: 106px; overflow: hidden; letter-spacing: .1px; }
.kid { display: flex; align-items: center; }
.sm { margin-left: -4px; }
.arr { margin: -14px 13px 0 21px; }
.k2 svg { margin: -2px 44px 0 -2px; }
.dash { display: block; width: 20px; height: 1px; background: #222; margin-top: 4px; }
.tree { position: absolute; left: 117px; top: 152px; width: 24px; height: 87px; border-left: 2px solid #555; border-bottom: 2px solid #555; border-bottom-left-radius: 6px; }
.scroll { position: absolute; left: 1776px; top: 75px; width: 11px; height: 62px; background: #c8c8c8; }

.shade { position: absolute; inset: 0; background: rgba(0,0,0,.4); }
.dialog { position: absolute; left: 712px; top: 265px; width: 498px; height: 314px; border-radius: 10px; background: #fff; box-shadow: 0 32px 64px rgba(0,0,0,.24), 0 0 10px rgba(0,0,0,.2); padding: 25px 35px 0; }
.dialog h2 { font-size: 27px; line-height: 40px; }
.dialog label { display: block; margin-top: 22px; line-height: 26px; font-size: 18.600px; color: #333; }
.dialog em { color: #d13438; font-style: normal; margin-left: 1px; }
.field { height: 47px; margin-top: 6px; border: 1px solid #d1d1d1; border-bottom-color: #616161; border-radius: 5px; padding: 3px 0 0 18.500px; line-height: 43px; }
.check { display: flex; align-items: center; margin: 13px 0 0 6px; height: 26px; color: #616161; }
.check i { width: 24px; height: 24px; border: 1px solid #616161; border-radius: 3px; }
.check span { width: 325px; margin: 2px 13px 0 8px; white-space: nowrap; }
.btns { display: flex; justify-content: flex-end; gap: 12px; margin-top: 28px; }
.btns button { height: 46px; border-radius: 5px; padding-top: 3px; }
.create { width: 96px; background: #117865; color: #fff; border: 0; }
.cancel { width: 141px; background: #fff; border: 1px solid #d1d1d1; }

.taskbar { height: 59px; flex: none; display: flex; align-items: center; background: linear-gradient(90deg, #192433, #1a2535 30%, #12273f 55%, #16283d 75%, #182535); border-top: 1px solid #3d4654; color: #fff; letter-spacing: 0; }
.start { margin-left: 41px; }
.tsearch { margin-left: 17px; width: 275px; height: 40px; border-radius: 20px; background: #3a4352; border: 1px solid #505a68; display: flex; align-items: center; padding-left: 14px; font-size: 18px; color: #dfe3e8; }
.tsearch span { width: 161px; margin-left: 11px; padding-top: 1px; }
.apps { display: flex; margin-left: 1px; height: 58px; }
.apps i { width: 55.050px; display: flex; align-items: center; justify-content: center; position: relative; }
.apps i.on::after { content: ""; position: absolute; left: 24px; bottom: 5px; width: 8px; height: 4px; border-radius: 2px; background: #9da4ae; }
.wb { position: absolute; left: 26px; top: 5px; width: 26px; height: 26px; border-radius: 50%; background: #dd9be0; color: #1c1c1c; font-size: 15px; font-weight: 400; line-height: 26px; text-align: center; letter-spacing: -.5px; }
.ltr { fill: #fff; font-size: 12px; font-weight: 700; text-anchor: middle; }
.tray { display: flex; align-items: center; margin-left: 84px; }
.wh { fill: none; stroke: #fff; stroke-width: 1.500; stroke-linecap: round; stroke-linejoin: round; }
.up { stroke-width: 2; }
.wifi { margin-left: 22px; }
.vol { margin-left: 8px; }
.bat { margin-left: 10px; }
.clock { width: 89px; text-align: right; font-size: 14.500px; line-height: 20px; }
.bell { margin-left: 10px; }
```
